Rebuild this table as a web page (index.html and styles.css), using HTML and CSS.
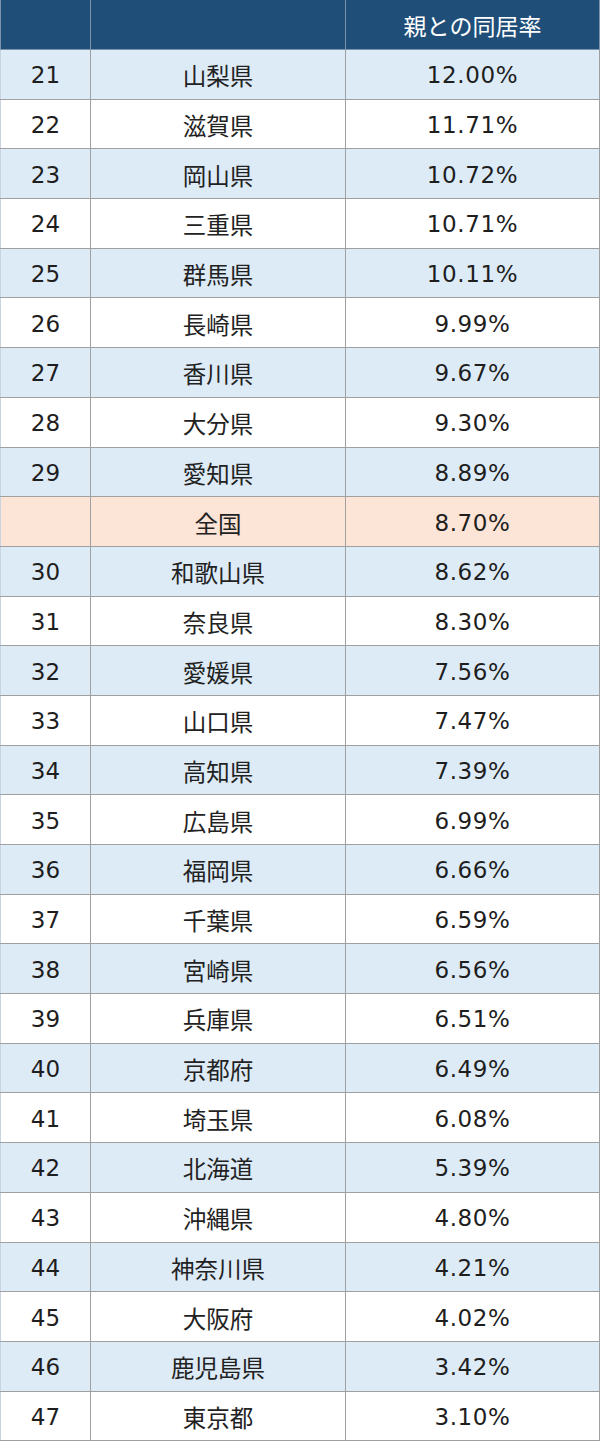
FILE: index.html
```html
<!DOCTYPE html>
<html lang="ja">
<head>
<meta charset="utf-8">
<link rel="stylesheet" href="styles.css">
</head>
<body>
<table class="rank">
<colgroup><col class="c1"><col class="c2"><col class="c3"></colgroup>
<thead>
<tr><th></th><th></th><th>親との同居率</th></tr>
</thead>
<tbody>
<tr class="b"><td>21</td><td>山梨県</td><td>12.00%</td></tr>
<tr><td>22</td><td>滋賀県</td><td>11.71%</td></tr>
<tr class="b"><td>23</td><td>岡山県</td><td>10.72%</td></tr>
<tr><td>24</td><td>三重県</td><td>10.71%</td></tr>
<tr class="b"><td>25</td><td>群馬県</td><td>10.11%</td></tr>
<tr><td>26</td><td>長崎県</td><td>9.99%</td></tr>
<tr class="b"><td>27</td><td>香川県</td><td>9.67%</td></tr>
<tr><td>28</td><td>大分県</td><td>9.30%</td></tr>
<tr class="b"><td>29</td><td>愛知県</td><td>8.89%</td></tr>
<tr class="n"><td></td><td>全国</td><td>8.70%</td></tr>
<tr class="b"><td>30</td><td>和歌山県</td><td>8.62%</td></tr>
<tr><td>31</td><td>奈良県</td><td>8.30%</td></tr>
<tr class="b"><td>32</td><td>愛媛県</td><td>7.56%</td></tr>
<tr><td>33</td><td>山口県</td><td>7.47%</td></tr>
<tr class="b"><td>34</td><td>高知県</td><td>7.39%</td></tr>
<tr><td>35</td><td>広島県</td><td>6.99%</td></tr>
<tr class="b"><td>36</td><td>福岡県</td><td>6.66%</td></tr>
<tr><td>37</td><td>千葉県</td><td>6.59%</td></tr>
<tr class="b"><td>38</td><td>宮崎県</td><td>6.56%</td></tr>
<tr><td>39</td><td>兵庫県</td><td>6.51%</td></tr>
<tr class="b"><td>40</td><td>京都府</td><td>6.49%</td></tr>
<tr><td>41</td><td>埼玉県</td><td>6.08%</td></tr>
<tr class="b"><td>42</td><td>北海道</td><td>5.39%</td></tr>
<tr><td>43</td><td>沖縄県</td><td>4.80%</td></tr>
<tr class="b"><td>44</td><td>神奈川県</td><td>4.21%</td></tr>
<tr><td>45</td><td>大阪府</td><td>4.02%</td></tr>
<tr class="b"><td>46</td><td>鹿児島県</td><td>3.42%</td></tr>
<tr><td>47</td><td>東京都</td><td>3.10%</td></tr>
</tbody>
</table>
</body>
</html>
```

FILE: styles.css
```css
html, body {
  margin: 0;
  padding: 0;
  background: #ffffff;
}
.rank {
  width: 599px;
  border-collapse: collapse;
  table-layout: fixed;
  font-family: "Noto Sans CJK JP", sans-serif;
  font-size: 23.5px;
  color: #222222;
}
.c1 { width: 90px; }
.c2 { width: 255px; }
.c3 { width: 254px; }
.rank th {
  height: 49px;
  background: #1f4e79;
  color: #ffffff;
  font-weight: 400;
  font-size: 23px;
  border: 1px solid #7d93ab;
  border-top: none;
  padding: 0;
  text-align: center;
}
.rank td {
  height: 46.7px;
  border: 1px solid #a0a0a0;
  padding: 2px 0 0 0;
  text-align: center;
  background: #ffffff;
}
.rank td:first-child,
.rank td:last-child {
  font-family: "DejaVu Sans", "Noto Sans CJK JP", sans-serif;
  font-size: 23px;
  color: #1e1e1e;
}
.rank td:last-child {
  letter-spacing: 0.6px;
}
.rank tr.b td { background: #ddebf7; }
.rank tr.n td { background: #fce4d6; }
.rank td:first-child { border-left-color: #c8d4e0; }
```
